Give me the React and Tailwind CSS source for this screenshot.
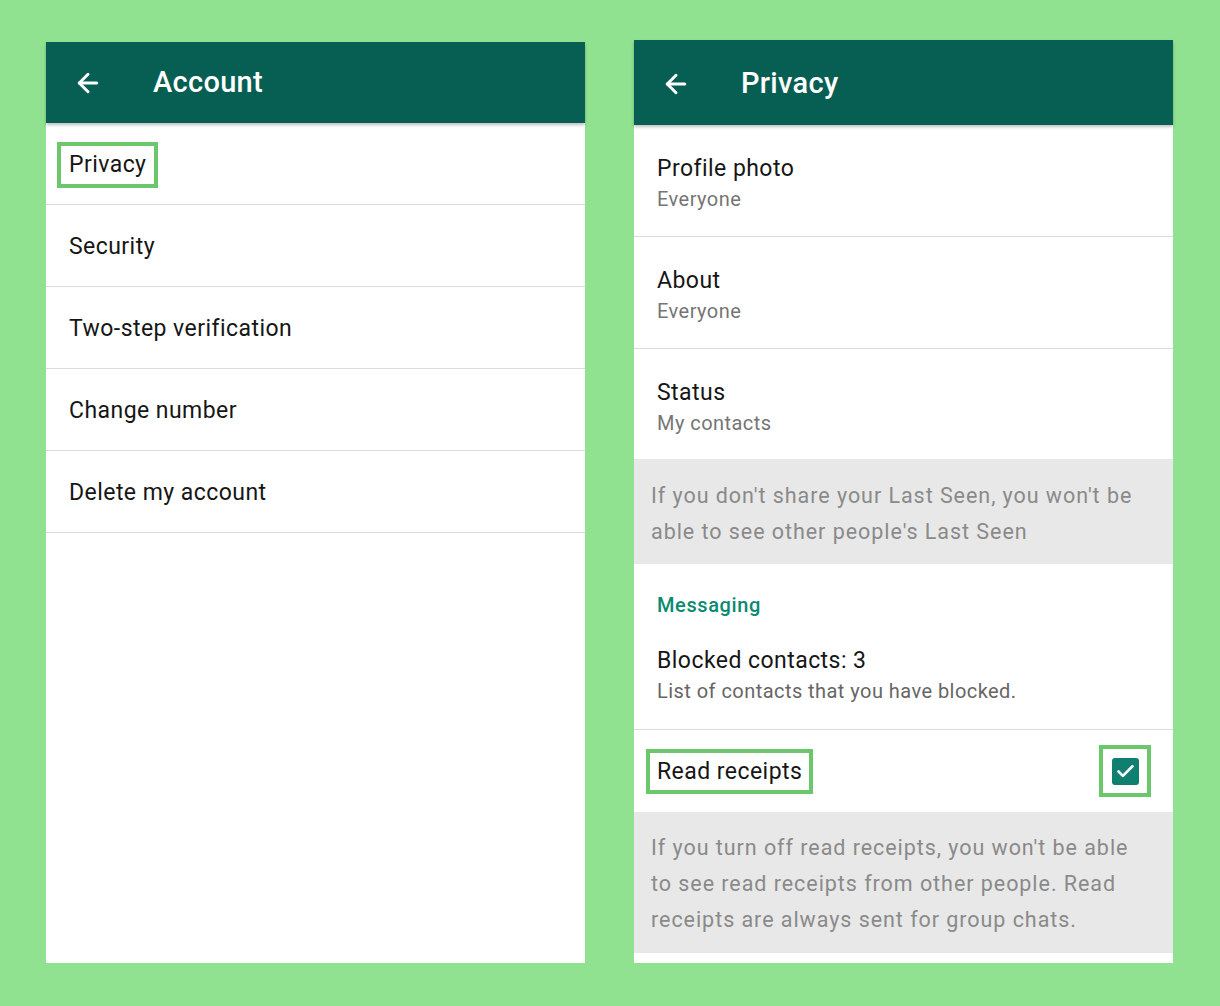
import { ArrowLeft, Check } from 'lucide-react';

const font = { fontFamily: 'Roboto, "Noto Sans", sans-serif' };

function Header({ title, h, pad }) {
  return (
    <div className={`${h} ${pad} bg-[#075e52] flex items-center shadow-[0_2px_3px_rgba(0,0,0,0.25)] relative z-10`}>
      <ArrowLeft className="ml-[27px] w-[30px] h-[30px] text-white" strokeWidth={2.4} />
      <span className="ml-[50px] text-white text-[29px] font-medium tracking-[0.3px]">{title}</span>
    </div>
  );
}

function Hl({ children, className = '' }) {
  return <div className={`border-[4px] border-[#6cc66c] ${className}`}>{children}</div>;
}

const accountRows = ['Security', 'Two-step verification', 'Change number', 'Delete my account'];

const titleCls = 'text-[23px] tracking-[0.45px] text-[#161616]';

function AccountPanel() {
  return (
    <div className="w-[539px] h-[921px] mt-[42px] bg-white flex flex-col">
      <Header title="Account" h="h-[81px]" pad="" />
      <div className="h-[82px] border-b border-[#dcdcdc] flex items-center pl-[11px] pt-[2px]">
        <Hl className={`h-[46px] px-[8px] pt-[2px] flex items-center ${titleCls}`}>Privacy</Hl>
      </div>
      {accountRows.map((r) => (
        <div key={r} className={`h-[82px] border-b border-[#dcdcdc] flex items-center pl-[23px] pt-[4px] ${titleCls}`}>{r}</div>
      ))}
    </div>
  );
}

function Item({ title, sub, last }) {
  return (
    <div className={`${last ? 'h-[110px]' : 'h-[112px] border-b border-[#dcdcdc]'} flex flex-col justify-center pl-[23px] pt-[7px]`}>
      <div className={`leading-[30px] ${titleCls}`}>{title}</div>
      <div className="text-[20px] leading-[30px] tracking-[0.45px] text-[#757575]">{sub}</div>
    </div>
  );
}

const noteCls = 'bg-[#e8e8e8] px-[17px] text-[21.5px] leading-[36px] tracking-[0.95px] text-[#8a8a8a]';

function PrivacyPanel() {
  return (
    <div className="w-[539px] h-[923px] mt-[40px] bg-white flex flex-col">
      <Header title="Privacy" h="h-[85px]" pad="pt-[3px]" />
      <Item title="Profile photo" sub="Everyone" />
      <Item title="About" sub="Everyone" />
      <Item title="Status" sub="My contacts" last />
      <div className={`h-[105px] pt-[19px] ${noteCls}`}>
        If you don't share your Last Seen, you won't be<br />able to see other people's Last Seen
      </div>
      <div className="h-[166px] border-b border-[#dcdcdc] pl-[23px] pt-[28px]">
        <div className="text-[20px] leading-[26px] font-medium tracking-[0.6px] text-[#0b8a70]">Messaging</div>
        <div className={`mt-[28px] leading-[30px] ${titleCls}`}>Blocked contacts: 3</div>
        <div className="text-[20px] leading-[30px] tracking-[0.45px] text-[#666]">List of contacts that you have blocked.</div>
      </div>
      <div className="h-[82px] flex items-center justify-between pl-[12px] pr-[22px]">
        <Hl className={`h-[45px] px-[7px] pt-[3px] flex items-center ${titleCls}`}>Read receipts</Hl>
        <Hl className="w-[52px] h-[52px] flex items-center justify-center">
          <div className="w-[27px] h-[27px] rounded-[3px] bg-[#0f7f70] flex items-center justify-center">
            <Check className="w-[21px] h-[21px] text-white" strokeWidth={3} />
          </div>
        </Hl>
      </div>
      <div className={`h-[141px] pt-[18px] ${noteCls}`}>
        If you turn off read receipts, you won't be able<br />to see read receipts from other people. Read<br />receipts are always sent for group chats.
      </div>
    </div>
  );
}

export default function App() {
  return (
    <div style={font} className="w-[1220px] h-[1006px] bg-[#90e290] flex items-start pl-[46px] gap-[49px] overflow-hidden">
      <AccountPanel />
      <PrivacyPanel />
    </div>
  );
}
